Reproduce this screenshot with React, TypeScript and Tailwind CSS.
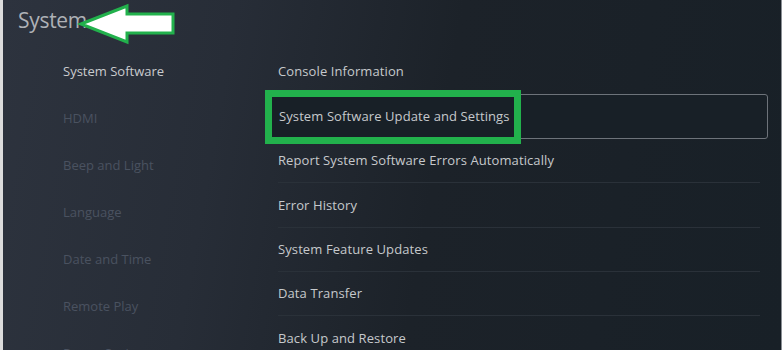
import React from 'react';

const sideItems = [
  'System Software',
  'HDMI',
  'Beep and Light',
  'Language',
  'Date and Time',
  'Remote Play',
  'Power Saving',
];

const rows = [
  'Console Information',
  'System Software Update and Settings',
  'Report System Software Errors Automatically',
  'Error History',
  'System Feature Updates',
  'Data Transfer',
  'Back Up and Restore',
];

const SELECTED = 1;

export default function App() {
  return (
    <div
      className="flex h-[350px] w-[782px] overflow-hidden bg-[#e4e4e4]"
      style={{ fontFamily: '"Open Sans", "Noto Sans", sans-serif' }}
    >
      <div className="w-[3px] shrink-0 bg-[#dcdcdc]" />
      <div className="relative flex flex-1 flex-col bg-[linear-gradient(100deg,#2d333e_0%,#272d37_28%,#1c2229_55%,#182027_100%)]">
        {/* header */}
        <div className="flex h-[48px] shrink-0 items-center pl-[15px] pb-[8px]">
          <span className="text-[21px] leading-none tracking-[-0.3px] text-[#aeb1b6]">System</span>
        </div>

        <div className="flex flex-1">
          {/* LEFT MENU */}
          <div className="w-[265px] shrink-0 pl-[60px]">
            {sideItems.map((s, i) => (
              <div
                key={s}
                className={`flex h-[47px] items-center text-[13px] ${i === 0 ? 'text-[#c9cbce]' : 'text-[#4a5260]'}`}
              >
                {s}
              </div>
            ))}
          </div>

          {/* RIGHT LIST */}
          <div className="mt-[2px] w-[500px] shrink-0">
            {rows.map((r, i) => (
              <div key={r} className="flex flex-col">
                <div
                  className={`flex h-[44.4px] items-center pl-[10px] text-[13px] tracking-[0.1px] text-[#c6c9cc] ${i === SELECTED ? 'rounded-[3px] border border-[#6d737a] bg-[#182027] pl-[9px]' : ''}`}
                >
                  {r}
                </div>
                {i !== SELECTED && i !== SELECTED - 1 && i < rows.length - 1 && (
                  <div className="-mt-px ml-[10px] mr-[8px] h-px bg-[#2a3139]" />
                )}
              </div>
            ))}
          </div>
        </div>

        {/* annotation: green box */}
        <div className="absolute left-[262px] top-[90px] h-[54px] w-[256px] border-[7px] border-[#22b14c]" />

        {/* annotation: arrow */}
        <svg className="absolute left-0 top-0" width="200" height="50" viewBox="3 0 200 50">
          <polygon
            points="81,24 127,6 127,14 173,14 173,33 127,33 127,42"
            fill="#ffffff"
            stroke="#22b14c"
            strokeWidth="3"
            strokeLinejoin="miter"
          />
        </svg>
      </div>
      <div className="w-px shrink-0 bg-[#8a8f95]" />
    </div>
  );
}
